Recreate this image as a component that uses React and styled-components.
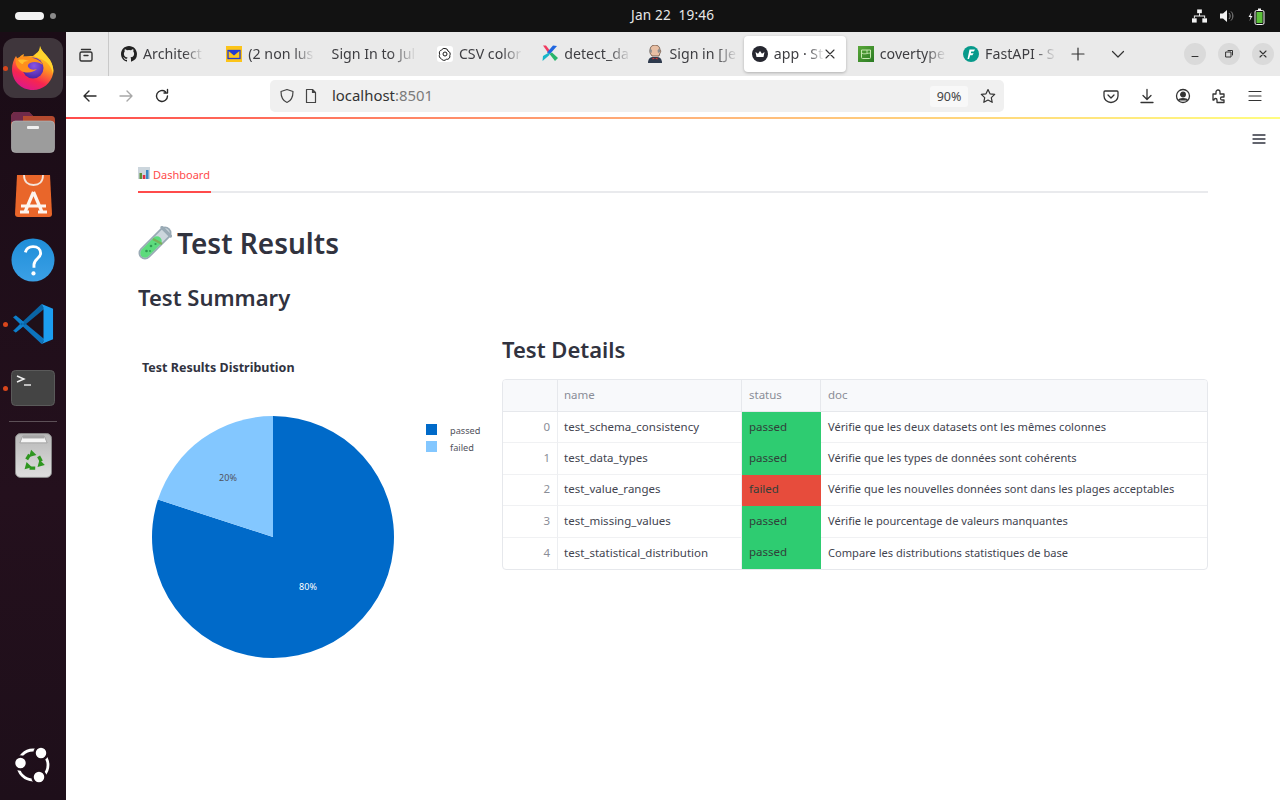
import React from 'react';
import styled, { createGlobalStyle } from 'styled-components';

const UI_FONT = '"Noto Sans", "Open Sans", sans-serif';
const PAGE_FONT = '"Noto Sans", "Open Sans", sans-serif';

const GlobalStyle = createGlobalStyle`
	html, body { margin: 0; padding: 0; height: 100%; overflow: hidden; }
	body { font-family: ${UI_FONT}; background: #fff; }
	* { box-sizing: border-box; }
`;

const Desktop = styled.div`
	width: 1280px;
	height: 800px;
	display: flex;
	flex-direction: column;
	overflow: hidden;
`;

const TopBar = styled.header`
	height: 32px;
	flex: none;
	background: #121212;
	color: #e8e8e8;
	display: flex;
	align-items: center;
	justify-content: space-between;
	padding: 0 15px 0 15px;
	position: relative;
`;

const Workspaces = styled.div`
	display: flex;
	align-items: center;
	gap: 6px;
`;

const WorkspaceDot = styled.span`
	display: block;
	height: ${p => (p.$active ? '8px' : '6px')};
	width: ${p => (p.$active ? '29px' : '6px')};
	border-radius: 4px;
	background: ${p => (p.$active ? '#f2f2f2' : '#8a8a8a')};
`;

const Clock = styled.div`
	position: absolute;
	left: 631px;
	top: 7px;
	font-size: 13.6px;
	line-height: 16px;
	letter-spacing: 0.2px;
	white-space: pre;
`;

const Tray = styled.div`
	display: flex;
	align-items: center;
	gap: 13px;
`;

const Main = styled.div`
	flex: 1;
	display: flex;
	min-height: 0;
`;

const Dock = styled.nav`
	width: 66px;
	flex: none;
	background: linear-gradient(180deg, #1a0c16 0%, #24101d 60%, #1e0f1a 100%);
	display: flex;
	flex-direction: column;
	align-items: center;
	padding-top: 6px;
	position: relative;
`;

const DockItem = styled.div`
	width: 60px;
	height: 60px;
	margin-bottom: 4px;
	flex: none;
	border-radius: 12px;
	display: flex;
	align-items: center;
	justify-content: center;
	position: relative;
	background: ${p => (p.$active ? '#3f363c' : 'transparent')};

	&::before {
		content: '';
		display: ${p => (p.$running ? 'block' : 'none')};
		position: absolute;
		left: 0;
		top: 27.5px;
		width: 5px;
		height: 5px;
		border-radius: 50%;
		background: #d8461c;
	}
`;

const DockRule = styled.div`
	width: 48px;
	height: 1px;
	flex: none;
	background: #5c5057;
	margin: -1px 0 3px;
`;

const DockBottom = styled.div`
	margin-top: auto;
	margin-bottom: 17px;
	line-height: 0;
`;

const Browser = styled.div`
	flex: 1;
	min-width: 0;
	display: flex;
	flex-direction: column;
`;

const TabStrip = styled.div`
	height: 44px;
	flex: none;
	background: #eaeaea;
	display: flex;
	align-items: center;
	position: relative;
`;

const TabOverview = styled.div`
	width: 23px;
	height: 44px;
	margin-left: 12px;
	padding-top: 14px;
	flex: none;
`;

const Sep = styled.div`
	width: 1px;
	height: 44px;
	background: #c9c9c9;
	margin-left: 7px;
	margin-right: 8px;
`;

const Tab = styled.div`
	width: ${p => (p.$active ? '102px' : '105.3px')};
	margin-left: ${p => (p.$active ? '-5px' : '0')};
	margin-right: ${p => (p.$active ? '8px' : '0')};
	height: 36px;
	flex: none;
	display: flex;
	align-items: center;
	gap: 6px;
	padding-left: ${p => (p.$active ? '8px' : '4px')};
	padding-bottom: 1px;
	border-radius: 4px;
	position: relative;
	font-size: 14.2px;
	color: #3e3e42;
	background: ${p => (p.$active ? '#fff' : 'transparent')};
	box-shadow: ${p => (p.$active ? '0 1px 3px rgba(0,0,0,.25)' : 'none')};
`;

const TabLabel = styled.span`
	display: block;
	margin-top: -1px;
	white-space: nowrap;
	-webkit-mask-image: linear-gradient(90deg, #000 70%, rgba(0,0,0,.08) 100%);
	mask-image: linear-gradient(90deg, #000 70%, rgba(0,0,0,.08) 100%);
`;

const TabClose = styled.span`
	position: absolute;
	right: 11px;
	top: 13px;
	line-height: 0;
`;

const StripButton = styled.div`
	width: 28px;
	height: 28px;
	flex: none;
	display: flex;
	align-items: center;
	justify-content: center;
	margin-left: ${p => p.$ml || 0}px;
`;

const WindowControls = styled.div`
	margin-left: auto;
	margin-right: 6px;
	display: flex;
	gap: 12px;
`;

const WindowButton = styled.div`
	width: 22px;
	height: 22px;
	border-radius: 50%;
	background: #dadada;
	display: flex;
	align-items: center;
	justify-content: center;
`;

const NavBar = styled.div`
	height: 41px;
	flex: none;
	background: #fff;
	display: flex;
	align-items: center;
	padding: 0 0 1px 12px;
`;

const NavButton = styled.div`
	width: 24px;
	height: 24px;
	flex: none;
	display: flex;
	align-items: center;
	justify-content: center;
	margin-right: ${p => p.$mr || 0}px;
`;

const UrlBar = styled.div`
	width: 734px;
	height: 32px;
	margin-left: 96px;
	flex: none;
	background: #f0f0f0;
	border-radius: 5px;
	display: flex;
	align-items: center;
	padding-left: 5px;
	font-size: 14.9px;
	color: #333;
`;

const Host = styled.span`
	margin-left: 9px;
	margin-top: -2px;
	span { color: #7a7a7a; }
`;

const Zoom = styled.div`
	margin-left: auto;
	width: 38px;
	height: 21px;
	background: #f8f8f8;
	border-radius: 3px;
	font-size: 12.5px;
	color: #444;
	display: flex;
	align-items: center;
	justify-content: center;
`;

const StarSlot = styled.div`
	width: 24px;
	margin: 0 4px 0 8px;
	display: flex;
	justify-content: center;
`;

const Toolbar = styled.div`
	display: flex;
	margin-left: 95px;
	gap: 12px;
`;

const Page = styled.main`
	flex: 1;
	position: relative;
	font-family: ${PAGE_FONT};
	background: #fff;
	color: #31333f;
	border-top: 2px solid;
	border-image: linear-gradient(90deg, #ff4b4b, #ffb27a 50%, #fffd80) 1;
	padding: 41px 72px 0;
	min-height: 0;
`;

const Hamburger = styled.div`
	position: absolute;
	right: 13px;
	top: 12px;
	line-height: 0;
`;

const Tabs = styled.div`
	border-bottom: 2px solid #e9eaed;
	height: 33px;
	display: flex;
`;

const PageTab = styled.div`
	width: 73px;
	height: 33px;
	border-bottom: 2px solid #ff4b4b;
	color: #ff4b4b;
	font-size: 11px;
	line-height: 15px;
	padding-top: 7px;
	display: flex;
	gap: 3px;
	white-space: nowrap;
`;

const Title = styled.h1`
	margin: 30px 0 0;
	height: 40px;
	font-size: 28px;
	font-weight: 600;
	line-height: 40px;
	color: #31333f;
	display: flex;
	align-items: center;
	gap: 5px;
`;

const Heading = styled.h2`
	margin: ${p => p.$mt || 0}px 0 0;
	height: 32px;
	font-size: 22px;
	font-weight: 600;
	line-height: 32px;
	color: #31333f;
`;

const Columns = styled.div`
	display: grid;
	grid-template-columns: 348px 706px;
	column-gap: 16px;
	margin-top: 21px;
`;

const Chart = styled.svg`
	display: block;
	margin-top: 12px;
`;

const Table = styled.div`
	margin-top: 14px;
	width: 706px;
	height: 191px;
	border: 1px solid #e6e8ec;
	border-radius: 4px;
	overflow: hidden;
	font-size: 11.5px;
	color: #31333f;
`;

const TableGrid = styled.div`
	display: grid;
	grid-template-columns: 55px 184px 79px 1fr;
	grid-template-rows: 32px repeat(5, 31.4px);
`;

const HeadCell = styled.div`
	background: #f8f9fb;
	color: #8a8d97;
	border-bottom: 1px solid #e6e8ec;
	border-right: ${p => (p.$last ? 'none' : '1px solid #e6e8ec')};
	padding: 0 0 2px 6px;
	display: flex;
	align-items: center;
`;

const Cell = styled.div`
	display: flex;
	align-items: center;
	padding: 0 0 2px 6px;
	white-space: nowrap;
	border-bottom: ${p => (p.$last ? 'none' : '1px solid #f0f1f3')};
	border-right: 1px solid #eceef1;
	color: #42444f;
`;

const IndexCell = styled(Cell)`
	justify-content: flex-end;
	padding: 0 7px 2px 0;
	color: #8a8d97;
`;

const StatusCell = styled(Cell)`
	background: ${p => (p.$failed ? '#e74c3c' : '#2ecc71')};
	color: #31403a;
	border: none;
	padding: 0 0 3px 7px;
`;

const DocCell = styled(Cell)`
	border-right: none;
	font-size: 11.1px;
	padding-left: 7px;
`;

const DocHead = styled(HeadCell)`
	padding-left: 7px;
`;

const StatusHead = styled(HeadCell)`
	padding-left: 7px;
`;

const rows = [
	['test_schema_consistency', 'passed', 'Vérifie que les deux datasets ont les mêmes colonnes'],
	['test_data_types', 'passed', 'Vérifie que les types de données sont cohérents'],
	['test_value_ranges', 'failed', 'Vérifie que les nouvelles données sont dans les plages acceptables'],
	['test_missing_values', 'passed', 'Vérifie le pourcentage de valeurs manquantes'],
	['test_statistical_distribution', 'passed', 'Compare les distributions statistiques de base'],
];

const Line = ({ size = 16, color = '#2b2b2b', sw = 1.4, children, vb = 16 }) => (
	<svg width={size} height={size} viewBox={`0 0 ${vb} ${vb}`} fill="none" stroke={color} strokeWidth={sw} strokeLinecap="round" strokeLinejoin="round">
		{children}
	</svg>
);

const FirefoxIcon = () => (
	<svg width="42" height="44" viewBox="0 0 42 44">
		<defs>
			<linearGradient id="ffa" x1="0.75" y1="0" x2="0.3" y2="1">
				<stop offset="0" stopColor="#ffe226" />
				<stop offset="0.4" stopColor="#ff9a1f" />
				<stop offset="0.72" stopColor="#f7264f" />
				<stop offset="1" stopColor="#d9178f" />
			</linearGradient>
			<radialGradient id="ffb" cx="0.55" cy="0.4" r="0.65">
				<stop offset="0" stopColor="#8a55e6" />
				<stop offset="1" stopColor="#45229e" />
			</radialGradient>
		</defs>
		<path d="M28 0C29 5 34 8 38 14C41 19 42 24 41 28C39 37 31 44 21 44C9 44 0 35 0 23C0 18 2 13 4 10L6 14C7 11 9 9 12 8L11 12C14 10 18 10 21 10C24 7 28 6 28 0Z" fill="url(#ffa)" />
		<path d="M28 0C29 5 34 8 38 14C41 19 42 24 41 28C40 21 35 15 29 13C26 12 24 11 22 10C25 7 28 6 28 0Z" fill="#ffd52e" />
		<circle cx="21" cy="22" r="10.500" fill="url(#ffb)" />
		<path d="M4 13C9 9 16 10 21 12C25 13 29 15 31 19C27 16 22 15 18 17C16 18 15 20 17 22C19 24 22 24 25 23C21 27 13 28 8 24C4 21 3 16 4 13Z" fill="#ff8f1c" />
		<path d="M6 14C10 13 14 14 17 15C13 15 11 16 11 18C9 18 7 16 6 14Z" fill="#ffc02e" />
	</svg>
);

const FilesIcon = () => (
	<svg width="44" height="41" viewBox="0 0 44 41">
		<path d="M0 5c0-3 2-5 4-5h14l4 4h18c3 0 4 1 4 4v10H0z" fill="#b34a2f" />
		<path d="M0 5c0-3 2-5 4-5h14l4 4H12v6H0z" fill="#6f2a4a" />
		<rect x="0.500" y="9" width="43" height="31.500" rx="4" fill="#9c9c9c" stroke="#bdbdbd" strokeWidth="0.600" />
		<rect x="16" y="14" width="12" height="3" rx="1" fill="#f0f0f0" />
	</svg>
);

const StoreIcon = () => (
	<svg width="37" height="42" viewBox="0 0 37 42">
		<path d="M2 0h33l2 39c0 2-1 3-3 3H3c-2 0-3-1-3-3z" fill="#e9662a" />
		<path d="M9 0c0 7 4 10 9.500 10S28 7 28 0" fill="none" stroke="#f4e3d8" strokeWidth="1.800" />
		<path d="M18.500 17L10 37M18.500 17L27 37M6 31h25M5 37h9M23 37h9" stroke="#fdf5ef" strokeWidth="3.200" fill="none" />
	</svg>
);

const HelpIcon = () => (
	<svg width="44" height="44" viewBox="0 0 46 46">
		<defs>
			<linearGradient id="hlp" x1="0" y1="0" x2="0" y2="1">
				<stop offset="0" stopColor="#1f8ed8" />
				<stop offset="1" stopColor="#3ba0e6" />
			</linearGradient>
		</defs>
		<circle cx="23" cy="23" r="22.500" fill="url(#hlp)" />
		<path d="M15 15c1-4 4-6 8-6 5 0 8 3 8 7 0 5-7 6-7 12v3" fill="none" stroke="#fff" strokeWidth="3" />
		<circle cx="23.500" cy="37" r="2.200" fill="#fff" />
	</svg>
);

const VscodeIcon = () => (
	<svg width="42" height="42" viewBox="0 0 44 44">
		<path d="M1 15l3-2 30 25-3 5z" fill="#0d74bd" />
		<path d="M1 29l3 2L34 6l-3-5z" fill="#0a65a6" />
		<path d="M31 1l12 5v32l-12 5 2-3V5z" fill="#1c9df0" />
		<path d="M31 11v22L17 22z" fill="#1e1019" />
		<path d="M2 15l2-2 9 7.500-3 3zM2 29l2 2 9-7.500-3-3z" fill="#0f7fcb" />
	</svg>
);

const TerminalIcon = () => (
	<svg width="44" height="36" viewBox="0 0 44 36">
		<rect x="0.500" y="0.500" width="43" height="35" rx="4" fill="#444" stroke="#5a5a5a" />
		<path d="M6 6l7 3-7 3" fill="none" stroke="#f2f2f2" strokeWidth="1.400" />
		<path d="M13 15h7" stroke="#f2f2f2" strokeWidth="1.400" />
	</svg>
);

const RecycleArrow = ({ angle }) => (
	<g transform={`rotate(${angle} 19 29)`}>
		<path d="M12 27L15 22" stroke="#2e9620" strokeWidth="3.400" fill="none" />
		<path d="M16.500 17L22 22.500L14.500 24.500z" fill="#2e9620" />
	</g>
);

const TrashIcon = () => (
	<svg width="37" height="45" viewBox="0 0 38 46">
		<defs>
			<linearGradient id="trs" x1="0" y1="0" x2="0" y2="1">
				<stop offset="0" stopColor="#b8b8b8" />
				<stop offset="1" stopColor="#dedede" />
			</linearGradient>
		</defs>
		<rect x="0.500" y="0.500" width="37" height="45" rx="5" fill="url(#trs)" stroke="#8a8a8a" />
		<path d="M5 10L8 3h22l3 7z" fill="#f5f5f5" stroke="#8f8f8f" strokeWidth="0.700" />
		<path d="M8 3h22v2.500H8z" fill="#a5a5a5" />
		<RecycleArrow angle={0} />
		<RecycleArrow angle={120} />
		<RecycleArrow angle={240} />
	</svg>
);

const UbuntuIcon = () => (
	<svg width="36" height="36" viewBox="0 0 36 36">
		<circle cx="18" cy="18" r="15" fill="none" stroke="#fff" strokeWidth="2.800" />
		<g stroke="#1f0f1a" strokeWidth="2.500" fill="#fff">
			<circle cx="5.500" cy="16" r="6.500" />
			<circle cx="26" cy="6" r="6.500" />
			<circle cx="24" cy="30" r="6.500" />
		</g>
	</svg>
);

const GithubIcon = () => (
	<svg width="16" height="16" viewBox="0 0 16 16" fill="#222">
		<path d="M8 0C3.580 0 0 3.580 0 8c0 3.540 2.290 6.530 5.470 7.590.4.070.55-.17.55-.38v-1.340c-2.230.48-2.690-1.070-2.690-1.070-.36-.93-.89-1.170-.89-1.170-.73-.5.050-.49.050-.49.8.060 1.230.83 1.230.83.710 1.220 1.870.87 2.330.66.070-.52.28-.87.5-1.070-1.780-.2-3.640-.89-3.640-3.950 0-.87.31-1.590.82-2.150-.08-.2-.36-1.020.08-2.120 0 0 .67-.21 2.200.82a7.500 7.500 0 0 1 4 0c1.530-1.040 2.200-.82 2.200-.82.44 1.100.16 1.920.08 2.120.51.56.82 1.270.82 2.150 0 3.070-1.870 3.750-3.650 3.950.29.25.54.73.54 1.480v2.200c0 .21.15.46.55.38A8.010 8.010 0 0 0 16 8c0-4.420-3.580-8-8-8z" />
	</svg>
);

const MailIcon = () => (
	<svg width="16" height="16" viewBox="0 0 16 16">
		<rect width="16" height="16" fill="#fcc419" />
		<rect x="2" y="4.500" width="12" height="8" fill="#fcc419" stroke="#2238d0" strokeWidth="1.300" />
		<path d="M2 4.500h12L8 9.500z" fill="#2238d0" />
	</svg>
);

const OpenAiIcon = () => (
	<svg width="16" height="16" viewBox="0 0 16 16" fill="none" stroke="#1a1a1a" strokeWidth="1">
		<rect width="16" height="16" rx="3" fill="#fff" stroke="none" />
		<circle cx="8" cy="8" r="2" />
		<path d="M8 2.500a3 3 0 0 1 3 2.600 3 3 0 0 1 1.800 4.400 3 3 0 0 1-3.500 3.800 3 3 0 0 1-5-.6 3 3 0 0 1-1.600-4.400 3 3 0 0 1 2-4.400A3 3 0 0 1 8 2.500z" />
	</svg>
);

const PinwheelIcon = () => (
	<svg width="16" height="17" viewBox="0 0 16 17">
		<path d="M1 0.500L4 0.500L9 7L7 9z" fill="#f03a5f" />
		<path d="M15 1L11 0.500L5 7.500L8 9z" fill="#1f66e0" />
		<path d="M0.500 16L1 11L7 7.500L7.500 10z" fill="#18b6c9" />
		<path d="M7.500 9L10 7.500L16 13L13 16z" fill="#28b56a" />
	</svg>
);

const JenkinsIcon = () => (
	<svg width="16" height="18" viewBox="0 0 16 18">
		<path d="M3 5c0-3 2-5 5-5s5 2 5 5c1 0 1 2 0 3l-1 3H5L3 8z" fill="#e8bfa4" stroke="#5a4032" strokeWidth="0.700" />
		<path d="M2.500 7C2 5 3 4 3.500 3.500L5 5.500 4.500 8zM13 7c.5-2-.5-3-1-3.500L10.500 5.500 11 8z" fill="#8c8c8c" />
		<path d="M1 18c0-4 2-6 5-6h4c3 0 5 2 5 6z" fill="#2e3a4d" />
		<path d="M5.500 12.500l2.500 1 2.500-1v2l-2.500-1-2.500 1z" fill="#d33833" />
	</svg>
);

const StreamlitIcon = () => (
	<svg width="16" height="16" viewBox="0 0 16 16">
		<circle cx="8" cy="8" r="8" fill="#262730" />
		<path d="M3.500 6l2.500 1.800L8 5l2 2.800L12.500 6l-1 5h-7z" fill="#fff" />
	</svg>
);

const CovertypeIcon = () => (
	<svg width="16" height="16" viewBox="0 0 16 16">
		<defs>
			<linearGradient id="cvt" x1="0" y1="0" x2="1" y2="1">
				<stop offset="0" stopColor="#5aa83a" />
				<stop offset="1" stopColor="#2a7a22" />
			</linearGradient>
		</defs>
		<rect width="16" height="16" fill="url(#cvt)" />
		<path d="M3.500 4h9v7.500a1 1 0 0 1-1 1h-7a1 1 0 0 1-1-1z" fill="none" stroke="#c6e8b0" strokeWidth="1" />
		<path d="M3.500 7c3 2 6 0 9 0M9 4v3" fill="none" stroke="#c6e8b0" strokeWidth="0.900" />
	</svg>
);

const FastApiIcon = () => (
	<svg width="16" height="16" viewBox="0 0 16 16">
		<circle cx="8" cy="8" r="8" fill="#079a8b" />
		<path d="M6.500 3.500H12L10.800 5.500H8.200L7.800 7.300H10.600L9.400 9.300H7.200L6 13H4.500z" fill="#fff" />
	</svg>
);

const TestTube = () => (
	<svg width="34" height="34" viewBox="0 0 34 34">
		<path d="M7 27L27 7" stroke="#99aab5" strokeWidth="13" strokeLinecap="round" />
		<path d="M7 27L27 7" stroke="#ccd6dd" strokeWidth="9.500" strokeLinecap="round" />
		<path d="M7 27L19 15" stroke="#5ddb7d" strokeWidth="9.500" strokeLinecap="round" />
		<path d="M15 13L24 18" stroke="#78b159" strokeWidth="2.400" />
		<g fill="#2f9a52">
			<circle cx="13" cy="20" r="1.300" />
			<circle cx="17.500" cy="18" r="1.100" />
			<circle cx="8.500" cy="25" r="1.300" />
			<circle cx="12" cy="25" r="0.900" />
		</g>
		<path d="M24 1.500L32.500 10" stroke="#99aab5" strokeWidth="3.200" strokeLinecap="round" />
	</svg>
);

const BarChartEmoji = () => (
	<svg width="12" height="12" viewBox="0 0 12 12">
		<rect width="12" height="12" fill="#ccd6dd" />
		<rect x="1.500" y="6" width="2.500" height="6" fill="#5c913b" />
		<rect x="4.800" y="8" width="2.500" height="4" fill="#dd2e44" />
		<rect x="8" y="3" width="2.500" height="9" fill="#3b88c3" />
	</svg>
);

const PieChart = () => {
	const cx = 135, cy = 191, r = 121;
	const a = 288 * Math.PI / 180;
	const px = cx + r * Math.sin(a);
	const py = cy - r * Math.cos(a);
	const textFont = { fontFamily: PAGE_FONT };
	return (
		<Chart width="348" height="330" viewBox="0 0 348 330">
			<text x="4" y="26" fontSize="12.500" fontWeight="700" fill="#31333f" style={textFont}>Test Results Distribution</text>
			<path d={`M${cx} ${cy}L${cx} ${cy - r}A${r} ${r} 0 1 1 ${px} ${py}Z`} fill="#006ac9" />
			<path d={`M${cx} ${cy}L${px} ${py}A${r} ${r} 0 0 1 ${cx} ${cy - r}Z`} fill="#83c7ff" />
			<text x="90" y="135" fontSize="9" textAnchor="middle" fill="#50525c" style={textFont}>20%</text>
			<text x="170" y="244" fontSize="9" textAnchor="middle" fill="#fff" style={textFont}>80%</text>
			<rect x="288" y="78" width="11" height="11" fill="#006ac9" />
			<rect x="288" y="95" width="11" height="11" fill="#83c7ff" />
			<text x="312" y="88" fontSize="9.200" fill="#50525c" style={textFont}>passed</text>
			<text x="312" y="105" fontSize="9.200" fill="#50525c" style={textFont}>failed</text>
		</Chart>
	);
};

const tabs = [
	{ icon: <GithubIcon />, label: 'Architect' },
	{ icon: <MailIcon />, label: '(2 non lus' },
	{ label: 'Sign In to Jul' },
	{ icon: <OpenAiIcon />, label: 'CSV color' },
	{ icon: <PinwheelIcon />, label: 'detect_da' },
	{ icon: <JenkinsIcon />, label: 'Sign in [Je' },
];

export default function App() {
	return (
		<>
			<GlobalStyle />
			<Desktop>
				<TopBar>
					<Workspaces>
						<WorkspaceDot $active />
						<WorkspaceDot />
					</Workspaces>
					<Clock>Jan 22  19:46</Clock>
					<Tray>
						<svg width="15" height="14" viewBox="0 0 16 14" fill="#f2f2f2">
							<rect x="5.500" y="0" width="5" height="4" />
							<rect x="0" y="9.500" width="5" height="4.500" />
							<rect x="11" y="9.500" width="5" height="4.500" />
							<path d="M7.500 4h1v2.500h5.500v3h-1V7.500H3v2H2v-3h5.500z" />
						</svg>
						<svg width="15" height="14" viewBox="0 0 15 14">
							<path d="M0 4.500h3L7 1v12L3 9.500H0z" fill="#f2f2f2" />
							<path d="M9 4c1.500 1.500 1.500 4.500 0 6M11 2.500c2.500 2.500 2.500 6.500 0 9" fill="none" stroke="#8d8d8d" strokeWidth="1" />
						</svg>
						<svg width="17" height="17" viewBox="0 0 17 17">
							<path d="M3.500 4L0.500 9h2L1.500 13l3-5h-2z" fill="#f2f2f2" />
							<rect x="7" y="2.500" width="9" height="14" rx="1.500" fill="none" stroke="#f2f2f2" />
							<rect x="10" y="0.500" width="3" height="2" fill="#f2f2f2" />
							<rect x="8.500" y="4" width="6" height="11" fill="#5cc13a" />
						</svg>
					</Tray>
				</TopBar>
				<Main>
					<Dock>
						<DockItem $active $running><FirefoxIcon /></DockItem>
						<DockItem><FilesIcon /></DockItem>
						<DockItem><StoreIcon /></DockItem>
						<DockItem><HelpIcon /></DockItem>
						<DockItem $running><VscodeIcon /></DockItem>
						<DockItem $running><TerminalIcon /></DockItem>
						<DockRule />
						<DockItem><TrashIcon /></DockItem>
						<DockBottom><UbuntuIcon /></DockBottom>
					</Dock>
					<Browser>
						<TabStrip>
							<TabOverview>
								<Line size="16" color="#333">
									<rect x="2" y="5" width="12" height="9" rx="1.500" />
									<path d="M3.500 2.500h9M6 8.500h4" />
								</Line>
							</TabOverview>
							<Sep />
							{tabs.map(t => (
								<Tab key={t.label}>
									{t.icon}
									<TabLabel>{t.label}</TabLabel>
								</Tab>
							))}
							<Tab $active>
								<StreamlitIcon />
								<TabLabel>app · St</TabLabel>
								<TabClose>
									<Line size="10" vb={10} color="#333" sw={1.100}><path d="M1 1l8 8M9 1l-8 8" /></Line>
								</TabClose>
							</Tab>
							<Tab><CovertypeIcon /><TabLabel>covertype</TabLabel></Tab>
							<Tab><FastApiIcon /><TabLabel>FastAPI - S</TabLabel></Tab>
							<StripButton>
								<Line size="16" color="#333" sw={1.200}><path d="M8 2v12M2 8h12" /></Line>
							</StripButton>
							<StripButton $ml={12}>
								<Line size="14" vb={14} color="#333" sw={1.200}><path d="M1.500 4.500L7 10l5.500-5.500" /></Line>
							</StripButton>
							<WindowControls>
								<WindowButton>
									<Line size="10" vb={10} color="#333" sw={1}><path d="M2 7.500h6" /></Line>
								</WindowButton>
								<WindowButton>
									<Line size="10" vb={10} color="#333" sw={1}><rect x="2" y="3" width="5" height="5" /><path d="M4 1.500h4.500V6" /></Line>
								</WindowButton>
								<WindowButton>
									<Line size="10" vb={10} color="#333" sw={1.100}><path d="M2 2l6 6M8 2L2 8" /></Line>
								</WindowButton>
							</WindowControls>
						</TabStrip>
						<NavBar>
							<NavButton $mr={12}>
								<Line size="16" color="#2b2b2b"><path d="M14 8H2M7 3L2 8l5 5" /></Line>
							</NavButton>
							<NavButton $mr={12}>
								<Line size="16" color="#a8a8a8"><path d="M2 8h12M9 3l5 5-5 5" /></Line>
							</NavButton>
							<NavButton>
								<Line size="16" color="#2b2b2b"><path d="M13.500 8a5.500 5.500 0 1 1-2-4.300M13.500 1.500v3.500H10" /></Line>
							</NavButton>
							<UrlBar>
								<NavButton>
									<Line size="16" color="#444" sw={1.200}><path d="M8 1.500l6 2c0 6-2 9.500-6 11-4-1.500-6-5-6-11z" /></Line>
								</NavButton>
								<NavButton>
									<Line size="16" color="#444" sw={1.200}><path d="M3.500 1.500h6l3 3v10h-9zM9.500 1.500v3h3" /></Line>
								</NavButton>
								<Host>localhost<span>:8501</span></Host>
								<Zoom>90%</Zoom>
								<StarSlot>
									<Line size="16" color="#333" sw={1.200}><path d="M8 1.500l2 4.300 4.700.6-3.400 3.200.9 4.700L8 12l-4.200 2.300.9-4.700L1.300 6.400 6 5.800z" /></Line>
								</StarSlot>
							</UrlBar>
							<Toolbar>
								<NavButton>
									<Line size="16" color="#333" sw={1.300}><path d="M2 3h12a1 1 0 0 1 1 1v4a7 6.500 0 0 1-14 0V4a1 1 0 0 1 1-1zM5 7l3 3 3-3" /></Line>
								</NavButton>
								<NavButton>
									<Line size="16" color="#333" sw={1.300}><path d="M8 1.500V11M4 7.500L8 11.500l4-4M2 14.500h12" /></Line>
								</NavButton>
								<NavButton>
									<Line size="16" color="#333" sw={1.300}><circle cx="8" cy="8" r="6.500" /><circle cx="8" cy="6.500" r="2.300" fill="#333" /><path d="M3.500 12.500c1-2.500 8-2.500 9 0" fill="#333" /></Line>
								</NavButton>
								<NavButton>
									<Line size="16" color="#333" sw={1.300}><path d="M2 6h3V4a2 2 0 0 1 4 0v2h4v3h-2a1.500 1.500 0 0 0 0 3h2v2.500H6V12a1.500 1.500 0 0 0-3 0H2z" /></Line>
								</NavButton>
								<NavButton>
									<Line size="16" color="#333" sw={1.200}><path d="M2 3.500h12M2 8h12M2 12.500h12" /></Line>
								</NavButton>
							</Toolbar>
						</NavBar>
						<Page>
							<Hamburger>
								<Line size="16" color="#31333f" sw={1.300}><path d="M2 4h12M2 8h12M2 12h12" /></Line>
							</Hamburger>
							<Tabs>
								<PageTab><BarChartEmoji />Dashboard</PageTab>
							</Tabs>
							<Title><TestTube />Test Results</Title>
							<Heading $mt={18}>Test Summary</Heading>
							<Columns>
								<PieChart />
								<div>
									<Heading $mt={-1}>Test Details</Heading>
									<Table>
										<TableGrid>
											<HeadCell />
											<HeadCell>name</HeadCell>
											<StatusHead>status</StatusHead>
											<DocHead $last>doc</DocHead>
											{rows.map(([name, status, doc], i) => {
												const last = i === rows.length - 1;
												return (
													<React.Fragment key={name}>
														<IndexCell $last={last}>{i}</IndexCell>
														<Cell $last={last}>{name}</Cell>
														<StatusCell $failed={status === 'failed'}>{status}</StatusCell>
														<DocCell $last={last}>{doc}</DocCell>
													</React.Fragment>
												);
											})}
										</TableGrid>
									</Table>
								</div>
							</Columns>
						</Page>
					</Browser>
				</Main>
			</Desktop>
		</>
	);
}
